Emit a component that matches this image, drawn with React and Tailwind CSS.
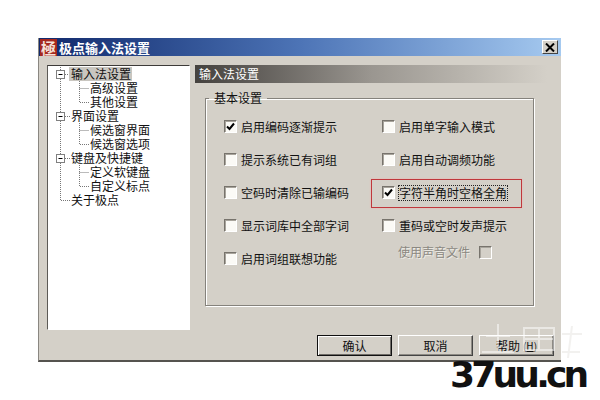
import React from 'react';

const cjk = { fontFamily: '"Noto Sans CJK SC", "Liberation Sans", sans-serif' };

const treeRows = [
  { text: '输入法设置', level: 1, box: true, selected: true },
  { text: '高级设置', level: 2, parent: true },
  { text: '其他设置', level: 2, parent: true, last: true },
  { text: '界面设置', level: 1, box: true },
  { text: '候选窗界面', level: 2, parent: true },
  { text: '候选窗选项', level: 2, parent: true, last: true },
  { text: '键盘及快捷键', level: 1, box: true },
  { text: '定义软键盘', level: 2, parent: true },
  { text: '自定义标点', level: 2, parent: true, last: true },
  { text: '关于极点', level: 1, end: true },
];

const leftOptions = [
  { text: '启用编码逐渐提示', checked: true },
  { text: '提示系统已有词组' },
  { text: '空码时清除已输编码' },
  { text: '显示词库中全部字词' },
  { text: '启用词组联想功能' },
];

const rightOptions = [
  { text: '启用单字输入模式' },
  { text: '启用自动调频功能' },
  { text: '字符半角时空格全角', checked: true, marked: true },
  { text: '重码或空时发声提示' },
];

const TreeLines = ({ row }) => {
  const dots = { stroke: '#777', strokeWidth: 1, strokeDasharray: '1 1', fill: 'none' };
  return (
    <svg width={row.level === 1 ? 22 : 41} height="14" className="shrink-0">
      {!row.end && <path d="M12.5 0V14" style={dots} />}
      {row.end && <path d="M12.5 0V7.5H22" style={dots} />}
      {row.level === 2 && <path d={row.last ? 'M31.5 0V7.5H41' : 'M31.5 0V14M31.5 7.5H41'} style={dots} />}
      {row.box && (
        <>
          <path d="M17 7.5H22" style={dots} />
          <rect x="8.5" y="3.5" width="8" height="8" fill="#fff" stroke="#808080" />
          <path d="M10.5 7.5H14.5" stroke="#000" />
        </>
      )}
    </svg>
  );
};

const CheckBox = ({ checked, disabled }) => (
  <span
    className={`flex h-[13px] w-[13px] shrink-0 items-center justify-center border border-b-white border-l-[#77736c] border-r-white border-t-[#77736c] shadow-[inset_1px_1px_0_#a8a49c] ${disabled ? 'bg-[#d4d0c8]' : 'bg-[#fbfaf6]'}`}
  >
    {checked && (
      <svg width="9" height="9" viewBox="0 0 9 9">
        <path d="M1 4.5L3.5 7L8 1.5" fill="none" stroke="#000" strokeWidth="2" />
      </svg>
    )}
  </span>
);

const Option = ({ text, checked, marked }) => (
  <div className="relative flex h-[33px] items-center gap-[4px]">
    <CheckBox checked={checked} />
    <span className={marked ? '-ml-px border border-dotted border-[#222] leading-[14px]' : ''}>{text}</span>
    {marked && (
      <span className="absolute left-[-11px] top-[3px] h-[29px] w-[151px] border border-[#c0383c] shadow-[0_0_2px_#eeb0b0]" />
    )}
  </div>
);

const DialogButton = ({ children, primary }) => (
  <button
    className={`flex h-[21px] w-[75px] items-center justify-center border text-xs text-[#111] ${
      primary
        ? 'border-[#111] shadow-[inset_1px_1px_0_#fff,inset_-1px_-1px_0_#6e6b66]'
        : 'border-b-[#444] border-l-white border-r-[#444] border-t-white shadow-[inset_-1px_-1px_0_#8d8a84]'
    }`}
  >
    {children}
  </button>
);

// faint stamp that lies across the help button and the white page
const Watermark = () => (
  <svg width="110" height="40" className="absolute left-[478px] top-[322px]">
    <path
      d="M8 14H32M20 2V30M4 30H36M46 6H76V28H46ZM46 17H76M61 6V28"
      fill="none"
      stroke="#fff"
      strokeOpacity="0.5"
      strokeWidth="2"
    />
    <path d="M84 12H104M84 30H102M94 4L90 36" fill="none" stroke="#e6e4df" strokeOpacity="0.5" strokeWidth="2" />
  </svg>
);

const App = () => {
  return (
    <div className="relative h-[400px] w-[600px] overflow-hidden bg-white pl-[38px] pt-[38px] text-xs text-[#111]" style={cjk}>
      <div className="flex h-[324px] w-[523px] flex-col border-b-2 border-l border-b-[#55534f] border-l-[#8a8781] bg-[#d4d0c8]">
        <div className="flex h-[18px] shrink-0 items-center bg-gradient-to-r from-[#12296c] via-[#4d74b6] to-[#a6caf0] pl-[1px] pr-[3px]">
          <span className="flex h-[17px] w-[17px] items-center justify-center bg-[#a5271f] text-[15px] font-bold leading-none text-[#f5e3da]">極</span>
          <span className="ml-[2px] text-[13px] font-bold leading-none text-white">极点输入法设置</span>
          <button className="ml-auto flex h-[14px] w-[16px] items-center justify-center border border-b-[#444] border-l-white border-r-[#444] border-t-white bg-[#d4d0c8]">
            <svg width="10" height="9" viewBox="0 0 10 9">
              <path d="M1 0.5L9 8.5M9 0.5L1 8.5" stroke="#000" strokeWidth="2" />
            </svg>
          </button>
        </div>

        <div className="flex flex-1 gap-[5px] pl-[8px] pt-[9px]">
          <div className="h-[265px] w-[143px] shrink-0 border border-b-white border-l-[#5c5a56] border-r-white border-t-[#3c3a38] bg-white pt-[1px]">
            {treeRows.map((row) => (
              <div key={row.text} className="flex h-[14px] items-center">
                <TreeLines row={row} />
                <span className={`px-[1px] leading-[14px] ${row.selected ? '-ml-px bg-[#c9c6c0] pl-[2px]' : ''}`}>{row.text}</span>
              </div>
            ))}
          </div>

          <div className="flex flex-col">
            <div className="flex h-[18px] w-[352px] items-center bg-gradient-to-r from-[#45423f] via-[#9a9690] to-[#d4d0c8] pl-[4px] text-white">
              输入法设置
            </div>

            <fieldset className="ml-[10px] mt-[8px] h-[215px] w-[329px] border border-[#85827c] pl-[18px] shadow-[inset_1px_1px_0_#fff,1px_1px_0_#fff]">
              <legend className="ml-[-15px] px-[5px] leading-[14px]">基本设置</legend>
              <div className="mt-[5px] flex">
                <div className="w-[158px]">
                  {leftOptions.map((opt) => (
                    <Option key={opt.text} {...opt} />
                  ))}
                </div>
                <div>
                  {rightOptions.map((opt) => (
                    <Option key={opt.text} {...opt} />
                  ))}
                  <div className="ml-[16px] flex h-[20px] items-center gap-[9px] text-[#8b8881]">
                    <span className="[text-shadow:1px_1px_0_#eeece6]">使用声音文件</span>
                    <CheckBox disabled />
                  </div>
                </div>
              </div>
            </fieldset>

            <div className="mt-[29px] flex gap-[6px] pl-[122px]">
              <DialogButton primary>确认</DialogButton>
              <DialogButton>取消</DialogButton>
              <DialogButton>
                帮助 <span className="ml-[3px] text-[10px]">(<span className="underline">H</span>)</span>
              </DialogButton>
            </div>
          </div>
        </div>
      </div>

      <Watermark />
      <span
        className="absolute left-[450px] top-[357px] text-[36px] font-bold leading-none tracking-[-3.8px] text-[#111]"
        style={{ fontFamily: '"DejaVu Sans", sans-serif' }}
      >
        37uu.cn
      </span>
    </div>
  );
};

export default App;
